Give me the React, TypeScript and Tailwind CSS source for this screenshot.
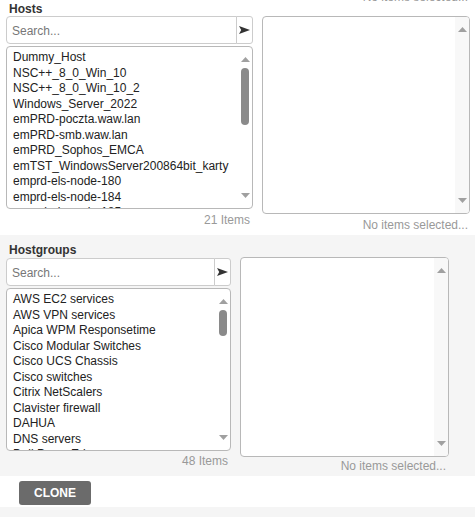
import React from "react";

const hosts = [
  "Dummy_Host",
  "NSC++_8_0_Win_10",
  "NSC++_8_0_Win_10_2",
  "Windows_Server_2022",
  "emPRD-poczta.waw.lan",
  "emPRD-smb.waw.lan",
  "emPRD_Sophos_EMCA",
  "emTST_WindowsServer200864bit_karty",
  "emprd-els-node-180",
  "emprd-els-node-184",
  "emprd-els-node-185",
];

const hostgroups = [
  "AWS EC2 services",
  "AWS VPN services",
  "Apica WPM Responsetime",
  "Cisco Modular Switches",
  "Cisco UCS Chassis",
  "Cisco switches",
  "Citrix NetScalers",
  "Clavister firewall",
  "DAHUA",
  "DNS servers",
  "Dell PowerEdge",
];

function ArrowUp() {
  return (
    <svg width="9" height="5" viewBox="0 0 9 5">
      <path d="M0 5 L4.5 0 L9 5 Z" fill="#a0a0a0" />
    </svg>
  );
}

function ArrowDown() {
  return (
    <svg width="9" height="5" viewBox="0 0 9 5">
      <path d="M0 0 L4.5 5 L9 0 Z" fill="#a0a0a0" />
    </svg>
  );
}

// Fake scrollbar laid over a list box
function ScrollBar({ thumbHeight, track }: { thumbHeight?: number; track?: boolean }) {
  return (
    <div className={`absolute top-0 right-0 bottom-0 w-[14px] ${track ? "bg-[#f8f8f8]" : ""}`}>
      <div className="absolute top-[10px] left-[2.5px] flex">
        <ArrowUp />
      </div>
      {thumbHeight ? (
        <div
          className="absolute top-[21px] left-[3px] w-[8px] rounded-full bg-[#8a8a8a]"
          style={{ height: thumbHeight }}
        />
      ) : null}
      <div className="absolute bottom-[10px] left-[2.5px] flex">
        <ArrowDown />
      </div>
    </div>
  );
}

function SendIcon() {
  return (
    <svg width="11" height="8" viewBox="0 0 11 8">
      <path d="M0 0 L11 4 L0 8 L2.2 4 Z" fill="#333" />
    </svg>
  );
}

interface PickerProps {
  items: string[];
  count: number;
  leftWidth: number;
  thumbHeight: number;
  countGap: string;
  rightBox: React.ReactNode;
}

function Picker({ items, count, leftWidth, thumbHeight, countGap, rightBox }: PickerProps) {
  return (
    <div className="flex items-start pl-[6px]">
      <div className="shrink-0" style={{ width: leftWidth }}>
        <div className="flex h-[28px]">
          <div className="flex-1 flex items-center border border-[#cccccc] rounded-l-[4px] bg-white pl-[5px] pt-px text-[#777]">
            Search...
          </div>
          <div className="w-[17px] -ml-px flex items-center justify-center border border-[#cccccc] rounded-r-[3px] bg-white">
            <SendIcon />
          </div>
        </div>
        <div className="relative mt-[2px] h-[163px] overflow-hidden border border-[#b8b8b8] rounded-[4px] bg-white pt-[3px] pl-[6px]">
          {items.map(item => (
            <div key={item} className="leading-[15.5px] whitespace-nowrap text-[#222]">
              {item}
            </div>
          ))}
          <ScrollBar thumbHeight={thumbHeight} />
        </div>
        <div className={`${countGap} leading-[14px] text-right pr-[3px] text-[#999]`}>{count} Items</div>
      </div>
      {rightBox}
    </div>
  );
}

export default function App() {
  return (
    <div className="w-[475px] h-[517px] overflow-hidden text-[12px] font-['Liberation_Sans',Arial,sans-serif]">
      {/* Hosts */}
      <div className="h-[235px] bg-white">
        <div className="h-[3px] overflow-hidden flex justify-end pr-[7px]">
          <span className="-mt-[10px] leading-[14px] text-[#999]">No items selected...</span>
        </div>
        <div className="pl-[9px] leading-[13px] font-bold text-[#333]">Hosts</div>
        <div>
          <Picker
            items={hosts}
            count={21}
            leftWidth={247}
            thumbHeight={57}
            countGap="mt-[4px]"
            rightBox={
              <div className="ml-[9px] w-[208px] shrink-0">
                <div className="relative h-[198px] border border-[#b8b8b8] rounded-[4px] bg-white overflow-hidden">
                  <ScrollBar track />
                </div>
                <div className="mt-[4px] leading-[14px] text-right pr-[2px] text-[#999]">No items selected...</div>
              </div>
            }
          />
        </div>
      </div>

      {/* Hostgroups */}
      <div className="h-[241px] bg-[#f5f5f5] pt-[8px]">
        <div className="pl-[9px] leading-[14px] font-bold text-[#333]">Hostgroups</div>
        <div className="mt-px">
          <Picker
            items={hostgroups}
            count={48}
            leftWidth={225}
            thumbHeight={26}
            countGap="mt-[3px]"
            rightBox={
              <div className="ml-[9px] -mt-px w-[209px] shrink-0">
                <div className="relative h-[200px] border border-[#b8b8b8] rounded-[4px] bg-white overflow-hidden">
                  <ScrollBar track />
                </div>
                <div className="mt-[2px] leading-[14px] text-right pr-[3px] text-[#999]">No items selected...</div>
              </div>
            }
          />
        </div>
      </div>

      {/* Actions */}
      <div className="h-[31px] bg-white pt-[5px] pl-[19px]">
        <button className="w-[72px] h-[24px] rounded-[3px] bg-[#6b6b6b] text-white font-bold text-[12px] leading-none">
          CLONE
        </button>
      </div>
      <div className="h-[10px] bg-[#f5f5f5]" />
    </div>
  );
}
